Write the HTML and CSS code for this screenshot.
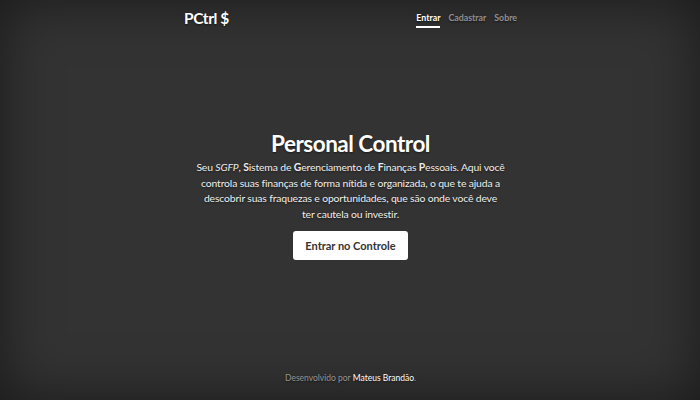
FILE: index.html
```html
<!DOCTYPE html>
<html lang="pt-BR">
<head>
<meta charset="utf-8">
<title>PCtrl $</title>
<link rel="stylesheet" href="styles.css">
</head>
<body>
<div class="cover">
  <header class="masthead">
    <h3 class="brand">PCtrl $</h3>
    <nav class="nav">
      <a class="nav-link active" href="#">Entrar</a>
      <a class="nav-link" href="#">Cadastrar</a>
      <a class="nav-link" href="#">Sobre</a>
    </nav>
  </header>
  <main class="hero">
    <h1 class="title">Personal Control</h1>
    <p class="lead">Seu <em>SGFP</em>, <b>S</b>istema de <b>G</b>erenciamento de <b>F</b>inanças <b>P</b>essoais. Aqui você<br>controla suas finanças de forma nítida e organizada, o que te ajuda a<br>descobrir suas fraquezas e oportunidades, que são onde você deve<br>ter cautela ou investir.</p>
    <a class="btn" href="#">Entrar no Controle</a>
  </main>
  <footer class="footer">
    <p>Desenvolvido por <a href="#">Mateus Brandão</a>.</p>
  </footer>
</div>
</body>
</html>
```
FILE: styles.css
```css
html, body {
  margin: 0;
  height: 100%;
}
body {
  background: #333;
  color: #fff;
  font-family: Lato, "Open Sans", "Liberation Sans", sans-serif;
  box-shadow: inset 0 0 56px rgba(0, 0, 0, 0.5);
  text-shadow: 0 1px 2px rgba(0, 0, 0, 0.5);
}
.cover {
  height: 400px;
  width: 334px;
  margin: 0 auto;
  padding-left: 1px;
  display: flex;
  flex-direction: column;
  box-sizing: border-box;
}
.masthead {
  display: flex;
  justify-content: space-between;
  align-items: flex-start;
  padding-top: 8px;
  height: 40px;
  box-sizing: border-box;
}
.brand {
  margin: 0;
  font-size: 15.5px;
  font-weight: 700;
  line-height: 20px;
  letter-spacing: -0.4px;
}
.nav {
  display: flex;
  gap: 8px;
  padding-top: 4px;
}
.nav-link {
  font-size: 8.8px;
  font-weight: 700;
  color: rgba(255, 255, 255, 0.5);
  text-decoration: none;
  line-height: 12px;
  padding-bottom: 2px;
  border-bottom: 2px solid transparent;
}
.nav-link.active {
  color: #fff;
  border-bottom-color: #fff;
}
.hero {
  flex: 1;
  display: flex;
  flex-direction: column;
  align-items: center;
  justify-content: center;
  text-align: center;
  padding-bottom: 22px;
}
.title {
  margin: 0 0 2px;
  font-size: 22.5px;
  font-weight: 700;
  line-height: 28px;
  letter-spacing: -0.5px;
}
.lead {
  margin: 0 0 9px;
  width: 333px;
  font-size: 10.4px;
  line-height: 15.5px;
  font-weight: 400;
  letter-spacing: -0.15px;
  color: #eee;
}
.lead b {
  font-weight: 700;
}
.btn {
  display: inline-block;
  background: #fff;
  color: #333;
  text-shadow: none;
  font-size: 11px;
  font-weight: 700;
  text-decoration: none;
  padding: 7px 12px;
  line-height: 15px;
  border-radius: 3px;
}
.footer {
  text-align: center;
  height: 28px;
  font-size: 8.5px;
  color: rgba(255, 255, 255, 0.5);
}
.footer p {
  margin: 0;
  line-height: 12px;
}
.footer a {
  color: #fff;
  text-decoration: none;
}
```
